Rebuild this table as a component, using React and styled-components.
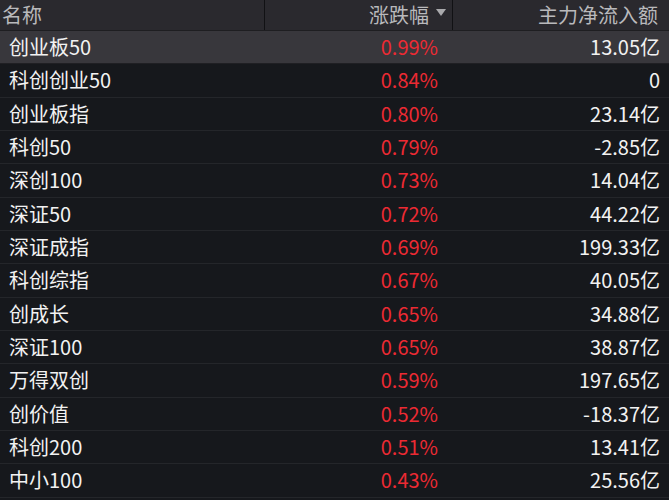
import React from "react";
import styled, { createGlobalStyle } from "styled-components";

const Global = createGlobalStyle`
  html, body { margin: 0; padding: 0; background: #16181c; }
  body { font-family: "Noto Sans CJK SC", "Noto Sans", sans-serif; }
`;

const Table = styled.div`
  width: 669px;
  height: 500px;
  overflow: hidden;
  background: #16181c;
`;

const Header = styled.div`
  display: grid;
  grid-template-columns: 265px 188px 216px;
  height: 31px;
  background: #2a292e;
  border-bottom: 1px solid #1e1e21;
  box-sizing: border-box;
`;

const HeadCell = styled.div`
  display: flex;
  align-items: center;
  justify-content: ${(p) => (p.$left ? "flex-start" : "flex-end")};
  padding: ${(p) => p.$pad};
  color: #b9b9bc;
  font-size: 20px;
  line-height: 1;
  border-right: ${(p) => (p.$divider ? "1px solid #111114" : "none")};
  gap: 7px;
`;

const Arrow = styled.span`
  width: 0;
  height: 0;
  border-left: 5px solid transparent;
  border-right: 5px solid transparent;
  border-top: 7px solid #a9a9ac;
  margin-top: -6px;
`;

const Row = styled.div`
  display: grid;
  grid-template-columns: 265px 188px 216px;
  height: 33.333px;
  box-sizing: border-box;
  background: ${(p) => (p.$active ? "#38373c" : "#16181c")};
  border-bottom: 1px solid ${(p) => (p.$active ? "#1f1f23" : "#24262a")};
`;

const Cell = styled.div`
  display: flex;
  align-items: center;
  justify-content: ${(p) => (p.$left ? "flex-start" : "flex-end")};
  padding: ${(p) => p.$pad};
  font-size: 20px;
  line-height: 1;
  color: ${(p) => p.$color || "#f2f2f2"};
  white-space: nowrap;
`;

const rows = [
  ["创业板50", "0.99%", "13.05亿"],
  ["科创创业50", "0.84%", "0"],
  ["创业板指", "0.80%", "23.14亿"],
  ["科创50", "0.79%", "-2.85亿"],
  ["深创100", "0.73%", "14.04亿"],
  ["深证50", "0.72%", "44.22亿"],
  ["深证成指", "0.69%", "199.33亿"],
  ["科创综指", "0.67%", "40.05亿"],
  ["创成长", "0.65%", "34.88亿"],
  ["深证100", "0.65%", "38.87亿"],
  ["万得双创", "0.59%", "197.65亿"],
  ["创价值", "0.52%", "-18.37亿"],
  ["科创200", "0.51%", "13.41亿"],
  ["中小100", "0.43%", "25.56亿"],
];

export default function App() {
  return (
    <Table>
      <Global />
      <Header>
        <HeadCell $left $divider $pad="0 0 0 2px">名称</HeadCell>
        <HeadCell $divider $pad="0 6px 0 0">
          涨跌幅<Arrow />
        </HeadCell>
        <HeadCell $pad="0 11px 0 0">主力净流入额</HeadCell>
      </Header>
      {rows.map((r, i) => (
        <Row key={r[0]} $active={i === 0}>
          <Cell $left $pad="0 0 0 9px">{r[0]}</Cell>
          <Cell $pad="0 15px 0 0" $color="#ec2a33">{r[1]}</Cell>
          <Cell $pad="0 9px 0 0">{r[2]}</Cell>
        </Row>
      ))}
    </Table>
  );
}
